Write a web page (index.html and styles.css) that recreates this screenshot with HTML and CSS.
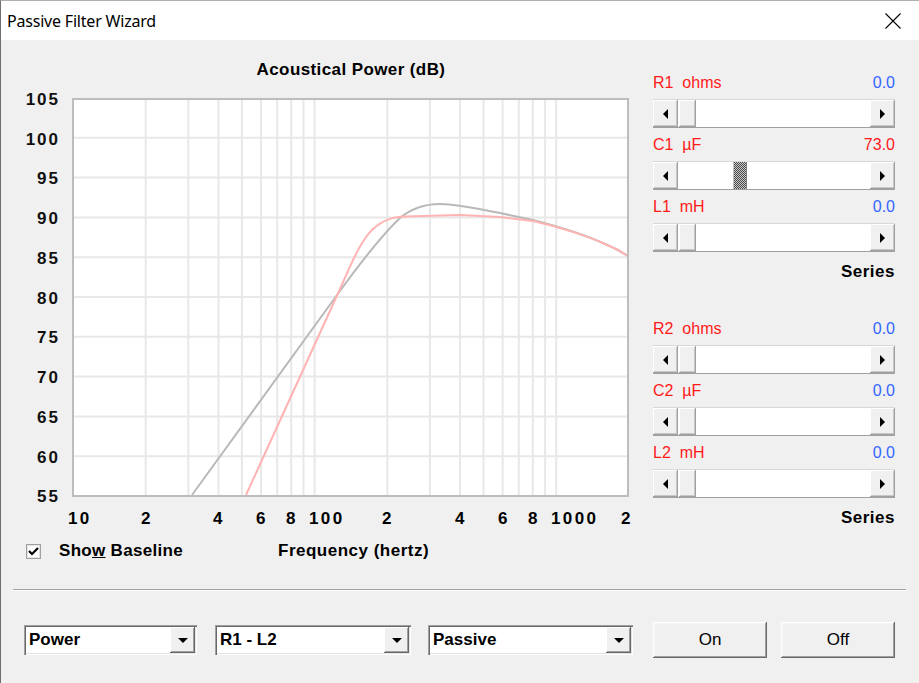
FILE: index.html
```html
<!DOCTYPE html>
<html lang="en">
<head>
    <meta charset="UTF-8">
    <title>Passive Filter Wizard</title>
    <link rel="stylesheet" href="styles.css">
</head>
<body>
<div class="window">
    <div class="titlebar">
        <span class="title">Passive Filter Wizard</span>
        <svg class="close" width="16" height="16" viewBox="0 0 16 16">
            <path d="M0.5 0.5L15.5 15.5M15.5 0.5L0.5 15.5" stroke="#000" stroke-width="1.1" fill="none"/>
        </svg>
    </div>

    <div class="client">
        <div class="upper">
            <!-- chart drawn in page coordinates -->
            <svg class="chart" width="644" height="490" viewBox="1 40 644 490">
                <text class="chart-title" x="351" y="75" text-anchor="middle">Acoustical Power (dB)</text>

                <rect x="73" y="98" width="555" height="398" fill="#fff"/>

                <g class="grid">
                    <line x1="73" x2="628" y1="137.8" y2="137.8"/>
                    <line x1="73" x2="628" y1="177.6" y2="177.6"/>
                    <line x1="73" x2="628" y1="217.4" y2="217.4"/>
                    <line x1="73" x2="628" y1="257.2" y2="257.2"/>
                    <line x1="73" x2="628" y1="297" y2="297"/>
                    <line x1="73" x2="628" y1="336.8" y2="336.8"/>
                    <line x1="73" x2="628" y1="376.6" y2="376.6"/>
                    <line x1="73" x2="628" y1="416.4" y2="416.4"/>
                    <line x1="73" x2="628" y1="456.2" y2="456.2"/>

                    <line y1="98" y2="496" x1="145.7" x2="145.7"/>
                    <line y1="98" y2="496" x1="188.3" x2="188.3"/>
                    <line y1="98" y2="496" x1="218.5" x2="218.5"/>
                    <line y1="98" y2="496" x1="241.9" x2="241.9"/>
                    <line y1="98" y2="496" x1="261" x2="261"/>
                    <line y1="98" y2="496" x1="277.2" x2="277.2"/>
                    <line y1="98" y2="496" x1="291.2" x2="291.2"/>
                    <line y1="98" y2="496" x1="303.5" x2="303.5"/>
                    <line y1="98" y2="496" x1="314.6" x2="314.6"/>
                    <line y1="98" y2="496" x1="387.3" x2="387.3"/>
                    <line y1="98" y2="496" x1="429.9" x2="429.9"/>
                    <line y1="98" y2="496" x1="460.1" x2="460.1"/>
                    <line y1="98" y2="496" x1="483.5" x2="483.5"/>
                    <line y1="98" y2="496" x1="502.6" x2="502.6"/>
                    <line y1="98" y2="496" x1="518.8" x2="518.8"/>
                    <line y1="98" y2="496" x1="532.8" x2="532.8"/>
                    <line y1="98" y2="496" x1="545.1" x2="545.1"/>
                    <line y1="98" y2="496" x1="556.2" x2="556.2"/>
                </g>

                <!-- baseline response -->
                <path class="curve baseline" d="M192 495L337 295C358 266 383 234 400 218C412 208 425 204 440 204C455 204 475 208 500 213L533 220C560 227 590 237 605 244C615 248 622 252 628 256"/>
                <!-- filtered response -->
                <path class="curve filtered" d="M246 495L340 289C351 264 361 240 373 229C383 220 392 217 405 216.5L460 215L500 217L533 221C560 227 590 237 605 244C615 248 622 252 628 256"/>

                <path class="frame" d="M73 496V99H628V496Z"/>

                <g class="ylabels">
                    <text x="60" y="105">105</text>
                    <text x="60" y="145">100</text>
                    <text x="60" y="184">95</text>
                    <text x="60" y="224">90</text>
                    <text x="60" y="264">85</text>
                    <text x="60" y="304">80</text>
                    <text x="60" y="343">75</text>
                    <text x="60" y="383">70</text>
                    <text x="60" y="423">65</text>
                    <text x="60" y="463">60</text>
                    <text x="60" y="502">55</text>
                </g>
                <g class="xlabels">
                    <text x="68" y="524">10</text>
                    <text x="141" y="524">2</text>
                    <text x="213" y="524">4</text>
                    <text x="256" y="524">6</text>
                    <text x="286" y="524">8</text>
                    <text x="309" y="524">100</text>
                    <text x="382" y="524">2</text>
                    <text x="455" y="524">4</text>
                    <text x="498" y="524">6</text>
                    <text x="528" y="524">8</text>
                    <text x="551" y="524">1000</text>
                    <text x="621" y="524">2</text>
                </g>
            </svg>

            <div class="sliders">
                <div class="param"><span class="name">R1&nbsp;&nbsp;ohms</span><span class="value">0.0</span></div>
                <div class="scroll">
                    <div class="sbtn"><span class="arrow left"></span></div>
                    <div class="track"><div class="thumb"></div></div>
                    <div class="sbtn"><span class="arrow right"></span></div>
                </div>
                <div class="param"><span class="name">C1&nbsp;&nbsp;µF</span><span class="value set">73.0</span></div>
                <div class="scroll">
                    <div class="sbtn"><span class="arrow left"></span></div>
                    <div class="track"><div class="thumb focused" style="margin-left:54px"></div></div>
                    <div class="sbtn"><span class="arrow right"></span></div>
                </div>
                <div class="param"><span class="name">L1&nbsp;&nbsp;mH</span><span class="value">0.0</span></div>
                <div class="scroll">
                    <div class="sbtn"><span class="arrow left"></span></div>
                    <div class="track"><div class="thumb"></div></div>
                    <div class="sbtn"><span class="arrow right"></span></div>
                </div>
                <div class="mode">Series</div>

                <div class="param second"><span class="name">R2&nbsp;&nbsp;ohms</span><span class="value">0.0</span></div>
                <div class="scroll">
                    <div class="sbtn"><span class="arrow left"></span></div>
                    <div class="track"><div class="thumb"></div></div>
                    <div class="sbtn"><span class="arrow right"></span></div>
                </div>
                <div class="param"><span class="name">C2&nbsp;&nbsp;µF</span><span class="value">0.0</span></div>
                <div class="scroll">
                    <div class="sbtn"><span class="arrow left"></span></div>
                    <div class="track"><div class="thumb"></div></div>
                    <div class="sbtn"><span class="arrow right"></span></div>
                </div>
                <div class="param"><span class="name">L2&nbsp;&nbsp;mH</span><span class="value">0.0</span></div>
                <div class="scroll">
                    <div class="sbtn"><span class="arrow left"></span></div>
                    <div class="track"><div class="thumb"></div></div>
                    <div class="sbtn"><span class="arrow right"></span></div>
                </div>
                <div class="mode">Series</div>
            </div>
        </div>

        <div class="baseline-row">
            <label class="check">
                <svg class="checkbox" width="15" height="15" viewBox="0 0 15 15">
                    <rect x="0.5" y="0.5" width="14" height="14" fill="#fff" stroke="#a0a0a0"/>
                    <rect x="1.5" y="1.5" width="12" height="12" fill="none" stroke="#e3e3e3"/>
                    <path d="M3 7L6 10L12 4" stroke="#000" stroke-width="2.2" fill="none"/>
                </svg>
                <span class="check-text">Sho<u>w</u> Baseline</span>
            </label>
            <span class="freq-label">Frequency (hertz)</span>
        </div>

        <div class="separator"></div>

        <div class="controls">
            <div class="combo combo-view"><span class="ctext">Power</span><span class="cbtn"><span class="arrow down"></span></span></div>
            <div class="combo combo-range"><span class="ctext">R1 - L2</span><span class="cbtn"><span class="arrow down"></span></span></div>
            <div class="combo combo-type"><span class="ctext">Passive</span><span class="cbtn"><span class="arrow down"></span></span></div>
            <button class="btn">On</button>
            <button class="btn">Off</button>
        </div>
    </div>
</div>
</body>
</html>
```

FILE: styles.css
```css
html, body {
    margin: 0;
    padding: 0;
}
body {
    width: 919px;
    height: 683px;
    overflow: hidden;
    background: #f0f0f0;
    font-family: 'Liberation Sans', Arial, sans-serif;
    color: #000;
}
.window {
    width: 919px;
    height: 683px;
    box-sizing: border-box;
    border-left: 1px solid #6f6f6f;
    border-top: 1px solid #b0b0b0;
    background: #f0f0f0;
}
.titlebar {
    height: 39px;
    background: #fff;
    display: flex;
    align-items: center;
    justify-content: space-between;
    padding: 0 18px 0 6px;
}
.title {
    font-family: 'Noto Sans', 'Liberation Sans', sans-serif;
    font-size: 16px;
    letter-spacing: -0.2px;
}
.close {
    display: block;
    margin-top: 1px;
}
.client {
    display: flex;
    flex-direction: column;
}
.upper {
    display: flex;
    height: 490px;
}
.chart {
    display: block;
    flex: none;
}
.chart text {
    font-family: 'Liberation Sans', Arial, sans-serif;
    font-size: 17px;
    font-weight: bold;
    fill: #000;
}
.chart .chart-title {
    letter-spacing: 0.4px;
}
.ylabels text {
    text-anchor: end;
    letter-spacing: 2px;
    fill: #101010;
}
.xlabels text {
    letter-spacing: 2.4px;
}
.grid line {
    stroke: #e8e8e8;
    stroke-width: 2;
}
.frame {
    fill: none;
    stroke: #bdbdbd;
    stroke-width: 2;
}
.curve {
    fill: none;
    stroke-width: 2;
    stroke-linejoin: round;
}
.baseline {
    stroke: #b9b9b9;
}
.filtered {
    stroke: #ffb3b3;
}

/* slider panel */
.sliders {
    width: 242px;
    margin-left: 8px;
    padding-top: 33px;
}
.param {
    display: flex;
    justify-content: space-between;
    height: 20px;
    line-height: 20px;
    margin-bottom: 6px;
    font-size: 16px;
    color: #ff1a1a;
}
.param.second {
    margin-top: 37px;
}
.value {
    color: #3366ff;
}
.value.set {
    color: #ff1a1a;
}
.scroll {
    display: flex;
    height: 29px;
    box-sizing: border-box;
    background: #fff;
    border-top: 1px solid #d8d8d8;
    border-bottom: 1px solid #a0a0a0;
    margin-bottom: 7px;
}
.sbtn, .thumb {
    background: #f0f0f0;
    box-shadow: inset -1px -1px #a0a0a0, inset 1px 1px #fff, inset -2px -2px #c8c8c8;
}
.sbtn {
    width: 25px;
    flex: none;
    display: flex;
    align-items: center;
    justify-content: center;
}
.track {
    flex: 1;
    display: flex;
    padding-left: 1px;
}
.thumb {
    width: 17px;
}
.thumb.focused {
    width: 14px;
    background: repeating-conic-gradient(#4a4a4a 0 25%, #c8c8c8 0 50%) 0 0 / 2px 2px;
    box-shadow: inset 1px 0 #c0c0c0, inset -1px 0 #808080;
}
.arrow {
    width: 0;
    height: 0;
    border: 5px solid transparent;
}
.arrow.left {
    border-right: 5px solid #000;
    border-left-width: 0;
}
.arrow.right {
    border-left: 5px solid #000;
    border-right-width: 0;
}
.arrow.down {
    border-top: 5px solid #000;
    border-bottom-width: 0;
}
.mode {
    margin-top: 10px;
    height: 20px;
    line-height: 20px;
    text-align: right;
    font-size: 17px;
    font-weight: bold;
    letter-spacing: 0.5px;
}

/* baseline checkbox row */
.baseline-row {
    display: flex;
    align-items: center;
    height: 16px;
    margin-top: 13px;
    padding-left: 25px;
}
.check {
    display: flex;
    align-items: center;
    width: 252px;
}
.checkbox {
    display: block;
    flex: none;
}
.check-text, .freq-label {
    font-size: 17px;
    font-weight: bold;
    letter-spacing: 0.3px;
}
.check-text {
    margin-left: 18px;
}
.freq-label {
    letter-spacing: 0.5px;
}
.separator {
    margin: 30px 13px 0 12px;
    height: 1px;
    background: #a0a0a0;
    border-bottom: 1px solid #fff;
}

/* bottom controls */
.controls {
    display: flex;
    align-items: center;
    height: 36px;
    margin-top: 31px;
    padding-left: 23px;
}
.combo {
    display: flex;
    height: 30px;
    box-sizing: border-box;
    padding: 2px;
    background: #fff;
    box-shadow: inset 1px 1px #a0a0a0, inset 2px 2px #696969, inset -1px -1px #fff, inset -2px -2px #e3e3e3;
}
.combo-view {
    width: 173px;
}
.combo-range {
    width: 196px;
    margin-left: 18px;
}
.combo-type {
    width: 205px;
    margin-left: 17px;
}
.ctext {
    flex: 1;
    padding-left: 3px;
    font-size: 17px;
    font-weight: bold;
    line-height: 26px;
}
.cbtn {
    width: 25px;
    display: flex;
    align-items: center;
    justify-content: center;
    background: #f0f0f0;
    box-shadow: inset -1px -1px #696969, inset 1px 1px #fff, inset -2px -2px #a0a0a0;
}
.btn {
    width: 114px;
    height: 36px;
    margin-left: 20px;
    background: #f0f0f0;
    border: none;
    box-shadow: inset -1px -1px #696969, inset 1px 1px #fff, inset -2px -2px #a0a0a0, inset 2px 2px #f4f4f4;
    font-family: 'Liberation Sans', Arial, sans-serif;
    font-size: 17px;
    color: #000;
    padding: 0;
}
.btn + .btn {
    margin-left: 14px;
}
```
